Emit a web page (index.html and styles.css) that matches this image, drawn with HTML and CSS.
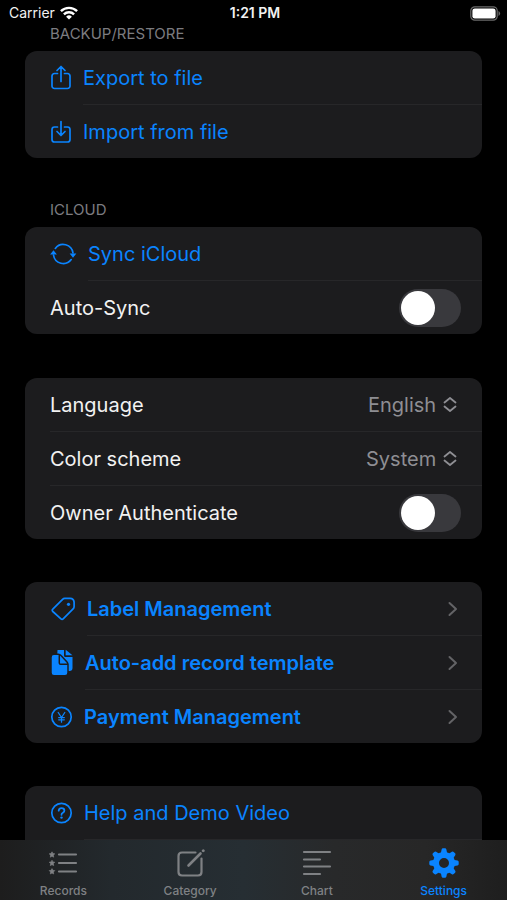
FILE: index.html
```html
<!DOCTYPE html>
<html lang="en">
<head>
<meta charset="utf-8">
<meta name="viewport" content="width=device-width, initial-scale=1">
<title>Settings</title>
<link rel="stylesheet" href="styles.css">
</head>
<body>
<header class="status">
  <div class="status-carrier">
    <span>Carrier</span>
    <svg width="18" height="14" viewBox="0 0 18 14" fill="none" stroke="#fff" stroke-width="2.4"><path d="M.9 5.2a11.6 11.6 0 0 1 16.2 0M3.9 8.4a7.3 7.3 0 0 1 10.2 0"/><path d="M9 13.6 6.1 10.7a4.1 4.1 0 0 1 5.8 0z" fill="#fff" stroke="none"/></svg>
  </div>
  <time class="status-time">1:21 PM</time>
  <div class="status-battery">
    <svg width="31" height="15" viewBox="0 0 31 15"><rect x=".8" y=".8" width="26.4" height="13.4" rx="4" fill="none" stroke="#6b6b6b" stroke-width="1.2"/><rect x="2.4" y="2.4" width="23.2" height="10.2" rx="2.4" fill="#fff"/><path d="M28.5 5v5q1.6-.8 1.6-2.5T28.500 5z" fill="#6b6b6b"/></svg>
  </div>
</header>

<main class="settings">
  <section class="group group-titled">
    <h2 class="group-title">BACKUP/RESTORE</h2>
    <div class="card">
      <button class="row action" type="button">
        <svg class="icon" width="22" height="26" viewBox="0 0 22 26"><path d="M7.500 8.500H4.500a2.500 2.500 0 0 0-2.500 2.500v10a2.500 2.500 0 0 0 2.500 2.500h13a2.500 2.500 0 0 0 2.500-2.500V11a2.500 2.500 0 0 0-2.500-2.500h-3M11 16.500V2M7 5.500l4-4 4 4"/></svg>
        <span class="row-body">Export to file</span>
      </button>
      <button class="row action" type="button">
        <svg class="icon" width="22" height="26" viewBox="0 0 22 26"><path d="M7.500 8H4.500A2.500 2.500 0 0 0 2 10.500v10A2.500 2.500 0 0 0 4.500 23h13a2.500 2.500 0 0 0 2.500-2.500v-10A2.500 2.500 0 0 0 17.500 8h-3M11 2.500V16M7 12.500l4 4 4-4"/></svg>
        <span class="row-body">Import from file</span>
      </button>
    </div>
  </section>

  <section class="group group-titled">
    <h2 class="group-title">ICLOUD</h2>
    <div class="card">
      <button class="row action" type="button">
        <svg class="icon" width="27" height="26" viewBox="0 0 27 26"><path d="M5.300 7.400A9.900 9.900 0 0 1 23 12M21.200 18.600A9.900 9.900 0 0 1 3.500 14"/><path class="solid" d="M19.600 12.500h6.800L23 16.700zM.1 13.500h6.800l-3.400-4.200z"/></svg>
        <span class="row-body">Sync iCloud</span>
      </button>
      <div class="row">
        <div class="row-body">
          <label for="auto-sync">Auto-Sync</label>
          <input class="switch" id="auto-sync" type="checkbox" role="switch">
        </div>
      </div>
    </div>
  </section>

  <section class="group">
    <div class="card">
      <div class="row">
        <div class="row-body">
          <label for="language">Language</label>
          <span class="picker">
            <select id="language"><option>English</option></select>
            <svg width="14" height="18" viewBox="0 0 14 18"><path d="M1.500 6.500 7 2l5.500 4.500M1.500 10.500 7 15l5.500-4.500"/></svg>
          </span>
        </div>
      </div>
      <div class="row">
        <div class="row-body">
          <label for="scheme">Color scheme</label>
          <span class="picker">
            <select id="scheme"><option>System</option></select>
            <svg width="14" height="18" viewBox="0 0 14 18"><path d="M1.500 6.500 7 2l5.500 4.500M1.500 10.500 7 15l5.500-4.500"/></svg>
          </span>
        </div>
      </div>
      <div class="row">
        <div class="row-body">
          <label for="owner-auth">Owner Authenticate</label>
          <input class="switch" id="owner-auth" type="checkbox" role="switch">
        </div>
      </div>
    </div>
  </section>

  <section class="group">
    <div class="card">
      <a class="row action strong" href="#labels">
        <svg class="icon" width="26" height="26" viewBox="0 0 26 26"><path d="M2.800 13.200 12.600 3.400q.9-.9 2.200-1h5.400q3.500.1 3.900 3.700v4.300q0 1.400-1 2.400l-9.700 9.900q-1.300 1.200-2.700 0l-7.900-7.200q-1.200-1.200 0-2.300z"/><circle class="solid" cx="18.500" cy="8.300" r="1.600"/></svg>
        <span class="row-body">Label Management</span>
        <svg class="chevron" width="10" height="16" viewBox="0 0 10 16"><path d="m1.500 2 6.500 6-6.500 6"/></svg>
      </a>
      <a class="row action strong" href="#templates">
        <svg class="icon" width="24" height="28" viewBox="0 0 24 28"><path class="solid" d="M7.500 1H14v5.500Q14 8 15.500 8h7v11q0 3-3 3h-5L7 10z"/><path class="solid" d="M15.700.8 22.500 6.300h-6.800z"/><path d="M3.800 5.200h4.500q1.600 0 2.700 1.300l6 6.400q1 1.100 1 2.500v8.400q0 3-3 3H4q-3 0-3-3V8.200q0-3 2.800-3z" fill="#0a84ff" stroke="#1c1c1e" stroke-width="1.500"/><path d="M9.300 6.500V14q0 1.300 1.300 1.300h6.800" stroke="#1c1c1e" stroke-width="1.500"/></svg>
        <span class="row-body">Auto-add record template</span>
        <svg class="chevron" width="10" height="16" viewBox="0 0 10 16"><path d="m1.500 2 6.500 6-6.500 6"/></svg>
      </a>
      <a class="row action strong" href="#payments">
        <svg class="icon" width="23" height="24" viewBox="0 0 23 24"><circle cx="11.500" cy="12" r="9.700"/><path d="m8.200 7.500 3.300 5 3.300-5M11.500 12.500v4.700M8.700 12.600h5.600M8.700 14.800h5.600" stroke-width="1.300"/></svg>
        <span class="row-body">Payment Management</span>
        <svg class="chevron" width="10" height="16" viewBox="0 0 10 16"><path d="m1.500 2 6.500 6-6.500 6"/></svg>
      </a>
    </div>
  </section>

  <section class="group">
    <div class="card card-continues">
      <a class="row action" href="#help">
        <svg class="icon" width="23" height="24" viewBox="0 0 23 24"><circle cx="11.500" cy="12" r="9.700"/><path d="M8.700 9.700q.2-2.600 2.900-2.600t2.800 2.400q0 1.400-1.500 2.300t-1.400 2.100" stroke-width="1.800"/><circle class="solid" cx="11.500" cy="16.600" r="1.200"/></svg>
        <span class="row-body">Help and Demo Video</span>
      </a>
    </div>
  </section>
</main>

<nav class="tabs">
  <a class="tab" href="#records">
    <svg width="30" height="30" viewBox="0 0 30 30"><path d="M11 6.500h17M11 15h17M11 23.500h17" stroke="currentColor" stroke-width="2.200" stroke-linecap="round"/><g fill="currentColor" stroke="currentColor" stroke-width=".6"><path id="star" d="m4 3.800.9 1.700 1.900.3-1.400 1.400.3 2-1.700-.9-1.700.9.3-2-1.400-1.400 1.900-.3z"/><use href="#star" y="8.400"/><use href="#star" y="16.800"/></g></svg>
    <span>Records</span>
  </a>
  <a class="tab" href="#category">
    <svg width="30" height="30" viewBox="0 0 30 30" fill="none" stroke="currentColor" stroke-width="2.200" stroke-linecap="round"><path d="M20.500 4.500H7Q3.500 4.500 3.500 8v16q0 3.500 3.500 3.500h16q3.500 0 3.500-3.500V10.500"/><path d="M13.500 17.500 25.500 5.500" stroke-width="2.600"/><path d="m28.200 2.800.1-.1" stroke-width="2.800"/></svg>
    <span>Category</span>
  </a>
  <a class="tab" href="#chart">
    <svg width="30" height="30" viewBox="0 0 30 30" stroke="currentColor" stroke-width="2.200" stroke-linecap="round"><path d="M2 4h26M2 11.500h16M2 18.500h26M2 26h16"/></svg>
    <span>Chart</span>
  </a>
  <a class="tab tab-current" href="#settings" aria-current="page">
    <svg width="30" height="30" viewBox="0 0 30 30" fill="currentColor"><path fill-rule="evenodd" d="M15 4a11 11 0 1 1 0 22 11 11 0 0 1 0-22zm0 6a5 5 0 1 0 0 10 5 5 0 0 0 0-10z"/><g><path id="cog" d="M11.700 6 12.600 1.500q.3-1.200 1.400-1.200h2q1.100 0 1.400 1.200L18.300 6zM11.700 24l.9 4.500q.3 1.200 1.400 1.200h2q1.100 0 1.400-1.200l.9-4.500z"/><use href="#cog" transform="rotate(45 15 15)"/><use href="#cog" transform="rotate(90 15 15)"/><use href="#cog" transform="rotate(135 15 15)"/></g></svg>
    <span>Settings</span>
  </a>
</nav>
</body>
</html>
```
FILE: styles.css
```css
* { box-sizing: border-box; }

body {
  margin: 0;
  height: 100vh;
  display: flex;
  flex-direction: column;
  overflow: hidden;
  background: #000;
  color: #f2f2f2;
  font-family: Inter, "Liberation Sans", sans-serif;
  font-size: 20px;
  line-height: 24px;
}

svg { display: block; flex: none; }

.status {
  flex: none;
  display: grid;
  grid-template-columns: 1fr auto 1fr;
  align-items: center;
  height: 22px;
  padding: 4px 6px 0 9px;
  font-size: 14px;
  line-height: 18px;
}
.status-carrier { display: flex; align-items: center; gap: 5px; }
.status-time { font-weight: 600; }
.status-battery { justify-self: end; }

.settings {
  flex: 1;
  min-height: 0;
  overflow: hidden;
  padding: 2px 25px 0;
}

.group { margin-bottom: 43px; }
.group-titled { margin-bottom: 42px; }
.group-titled + .group:not(.group-titled) { margin-top: 44px; }
.group-title {
  margin: 0;
  padding: 0 25px 7px;
  font-size: 15px;
  font-weight: 400;
  line-height: 20px;
  color: #7c7c80;
}

.card {
  overflow: hidden;
  border-radius: 12px;
  background: #1c1c1e;
}
.card-continues { border-radius: 12px 12px 0 0; }

.row {
  position: relative;
  display: flex;
  align-items: center;
  gap: 11px;
  width: 100%;
  padding: 0 0 0 25px;
  border: 0;
  background: none;
  color: inherit;
  font: inherit;
  text-align: left;
  text-decoration: none;
}
.row-body {
  flex: 1;
  display: flex;
  align-items: center;
  justify-content: space-between;
  height: 54px;
  padding-right: 21px;
  border-bottom: 1px solid #272729;
}
.row:last-child .row-body { height: 53px; border-bottom: 0; }
.card-continues .row:last-child .row-body { height: 54px; border-bottom: 1px solid #272729; }

.action { color: #0a84ff; cursor: pointer; }
.strong { font-weight: 600; }

.icon {
  fill: none;
  stroke: #0a84ff;
  stroke-width: 1.7;
  stroke-linecap: round;
  stroke-linejoin: round;
}
.icon .solid { fill: #0a84ff; stroke: none; }

.chevron {
  position: absolute;
  right: 24px;
  fill: none;
  stroke: #636366;
  stroke-width: 2;
  stroke-linecap: round;
  stroke-linejoin: round;
}

.picker { display: flex; align-items: center; gap: 6px; padding-right: 4px; color: #8e8e93; }
.picker select {
  appearance: none;
  margin: 0;
  padding: 0;
  border: 0;
  background: none;
  color: inherit;
  font: inherit;
}
.picker svg {
  fill: none;
  stroke: currentColor;
  stroke-width: 1.8;
  stroke-linecap: round;
  stroke-linejoin: round;
}

.switch {
  appearance: none;
  display: flex;
  width: 62px;
  height: 38px;
  margin: 0;
  padding: 2px;
  border-radius: 19px;
  background: #39393d;
}
.switch::before {
  content: "";
  width: 34px;
  height: 34px;
  border-radius: 50%;
  background: #fff;
}
.switch:checked { justify-content: flex-end; background: #30d158; }

.tabs {
  flex: none;
  display: grid;
  grid-template-columns: repeat(4, 1fr);
  height: 60px;
  background: linear-gradient(90deg, #1d1d1d 0%, #23292d 22%, #262e33 48%, #28292a 66%, #272727 84%, #1e1e1e 100%);
}
.tab {
  display: flex;
  flex-direction: column;
  align-items: center;
  gap: 5px;
  padding-top: 8px;
  color: #7f8184;
  font-size: 12px;
  font-weight: 500;
  line-height: 16px;
  text-decoration: none;
}
.tab-current { color: #0a84ff; }
```
